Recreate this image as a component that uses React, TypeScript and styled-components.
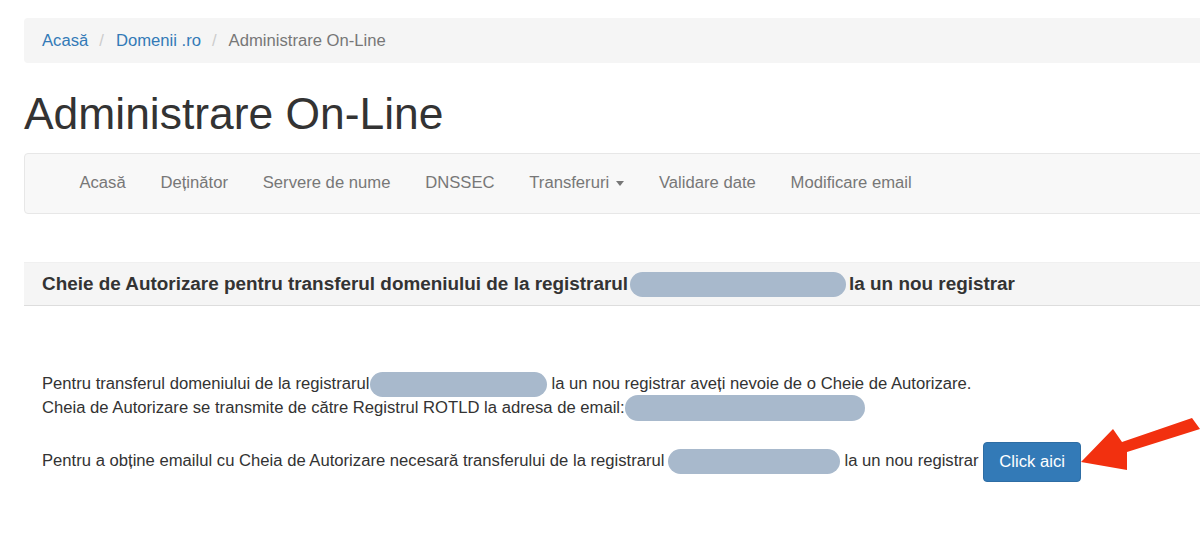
import styled, { createGlobalStyle } from "styled-components";

const GlobalStyle = createGlobalStyle`
  html, body {
    margin: 0;
    padding: 0;
    overflow: hidden;
    background: #fff;
  }
  body {
    font-family: "Liberation Sans", Arial, Helvetica, sans-serif;
    font-size: 16.65px;
    line-height: 24px;
    color: #333;
  }
`;

const Page = styled.div`
  width: 1240px;
  padding: 18px 0 0 24px;
`;

const Breadcrumb = styled.ol`
  list-style: none;
  margin: 0;
  padding: 10.5px 18px;
  background: #f5f5f5;
  border-radius: 4px;
  display: flex;
  align-items: center;
`;

const Crumb = styled.li<{ $active?: boolean }>`
  color: ${({ $active }) => ($active ? "#777" : "#337ab7")};

  &:not(:first-child)::before {
    content: "/";
    color: #ccc;
    padding: 0 12px 0 11px;
  }
`;

const Title = styled.h1`
  margin: 27px 0 15px;
  font-size: 44.4px;
  line-height: 1.07;
  font-weight: 500;
  color: #333;
`;

const Navbar = styled.nav`
  background: #f8f8f8;
  border: 1px solid #e7e7e7;
  border-radius: 4px;
  padding-left: 37px;
  display: flex;
`;

const NavItem = styled.a`
  display: flex;
  align-items: center;
  padding: 17.5px 17.4px;
  color: #777;
  text-decoration: none;
  cursor: pointer;
`;

const Caret = styled.span`
  display: inline-block;
  width: 0;
  height: 0;
  margin-left: 7px;
  border-top: 5px solid #777;
  border-left: 4.5px solid transparent;
  border-right: 4.5px solid transparent;
`;

const Panel = styled.section`
  margin-top: 48px;
`;

const PanelHeading = styled.div`
  background: #f5f5f5;
  border-top: 1px solid #f0f0f0;
  border-bottom: 1px solid #ddd;
  padding: 11px 18px;
`;

const PanelTitle = styled.h3`
  margin: 0;
  font-size: 18.9px;
  line-height: 20px;
  font-weight: 700;
  color: #333;
`;

const PanelBody = styled.div`
  padding: 66px 18px 0;
`;

const Paragraph = styled.p<{ $gap?: number }>`
  margin: 0 0 ${({ $gap }) => $gap ?? 0}px;
`;

const Redacted = styled.span<{ $w: number; $h?: number; $before?: number; $after?: number }>`
  display: inline-block;
  width: ${({ $w }) => $w}px;
  height: ${({ $h }) => $h ?? 25}px;
  margin: -4px ${({ $after }) => $after ?? 4}px -4px ${({ $before }) => $before ?? 1}px;
  vertical-align: middle;
  background: #a8b9cc;
  border-radius: 13px;
`;

const ButtonWrap = styled.span`
  position: relative;
  display: inline-block;
  vertical-align: middle;
`;

const Button = styled.button`
  display: block;
  font-family: inherit;
  font-size: 16.65px;
  line-height: 24px;
  padding: 7px 15px;
  color: #fff;
  background: #337ab7;
  border: 1px solid #2e6da4;
  border-radius: 4px;
  cursor: pointer;
`;

const Arrow = styled.svg`
  position: absolute;
  left: 87px;
  top: -38px;
  width: 135px;
  height: 75px;
  overflow: visible;
`;

const navLinks = ["Acasă", "Deținător", "Servere de nume", "DNSSEC", "Transferuri", "Validare date", "Modificare email"];

export default function App() {
  return (
    <>
      <GlobalStyle />
      <Page>
        <Breadcrumb>
          <Crumb>Acasă</Crumb>
          <Crumb>Domenii .ro</Crumb>
          <Crumb $active>Administrare On-Line</Crumb>
        </Breadcrumb>

        <Title>Administrare On-Line</Title>

        <Navbar>
          {navLinks.map((label) => (
            <NavItem key={label}>
              {label}
              {label === "Transferuri" && <Caret />}
            </NavItem>
          ))}
        </Navbar>

        <Panel>
          <PanelHeading>
            <PanelTitle>
              Cheie de Autorizare pentru transferul domeniului de la registrarul
              <Redacted $w={216} $before={2} $after={3} />
              la un nou registrar
            </PanelTitle>
          </PanelHeading>
          <PanelBody>
            <Paragraph $gap={22}>
              Pentru transferul domeniului de la registrarul
              <Redacted $w={177} />
              la un nou registrar aveți nevoie de o Cheie de Autorizare.
              <br />
              Cheia de Autorizare se transmite de către Registrul ROTLD la adresa de email:
              <Redacted $w={240} $h={26} $before={0} />
            </Paragraph>
            <Paragraph>
              Pentru a obține emailul cu Cheia de Autorizare necesară transferului de la registrarul
              <Redacted $w={172} $before={3} $after={5} />
              la un nou registrar{" "}
              <ButtonWrap>
                <Button type="button">Click aici</Button>
                <Arrow viewBox="0 0 135 75">
                  <polygon
                    points="11,58 43,25 52,38 122,14 130,25 57,48 57,66"
                    fill="#f2300f"
                  />
                </Arrow>
              </ButtonWrap>
            </Paragraph>
          </PanelBody>
        </Panel>
      </Page>
    </>
  );
}
